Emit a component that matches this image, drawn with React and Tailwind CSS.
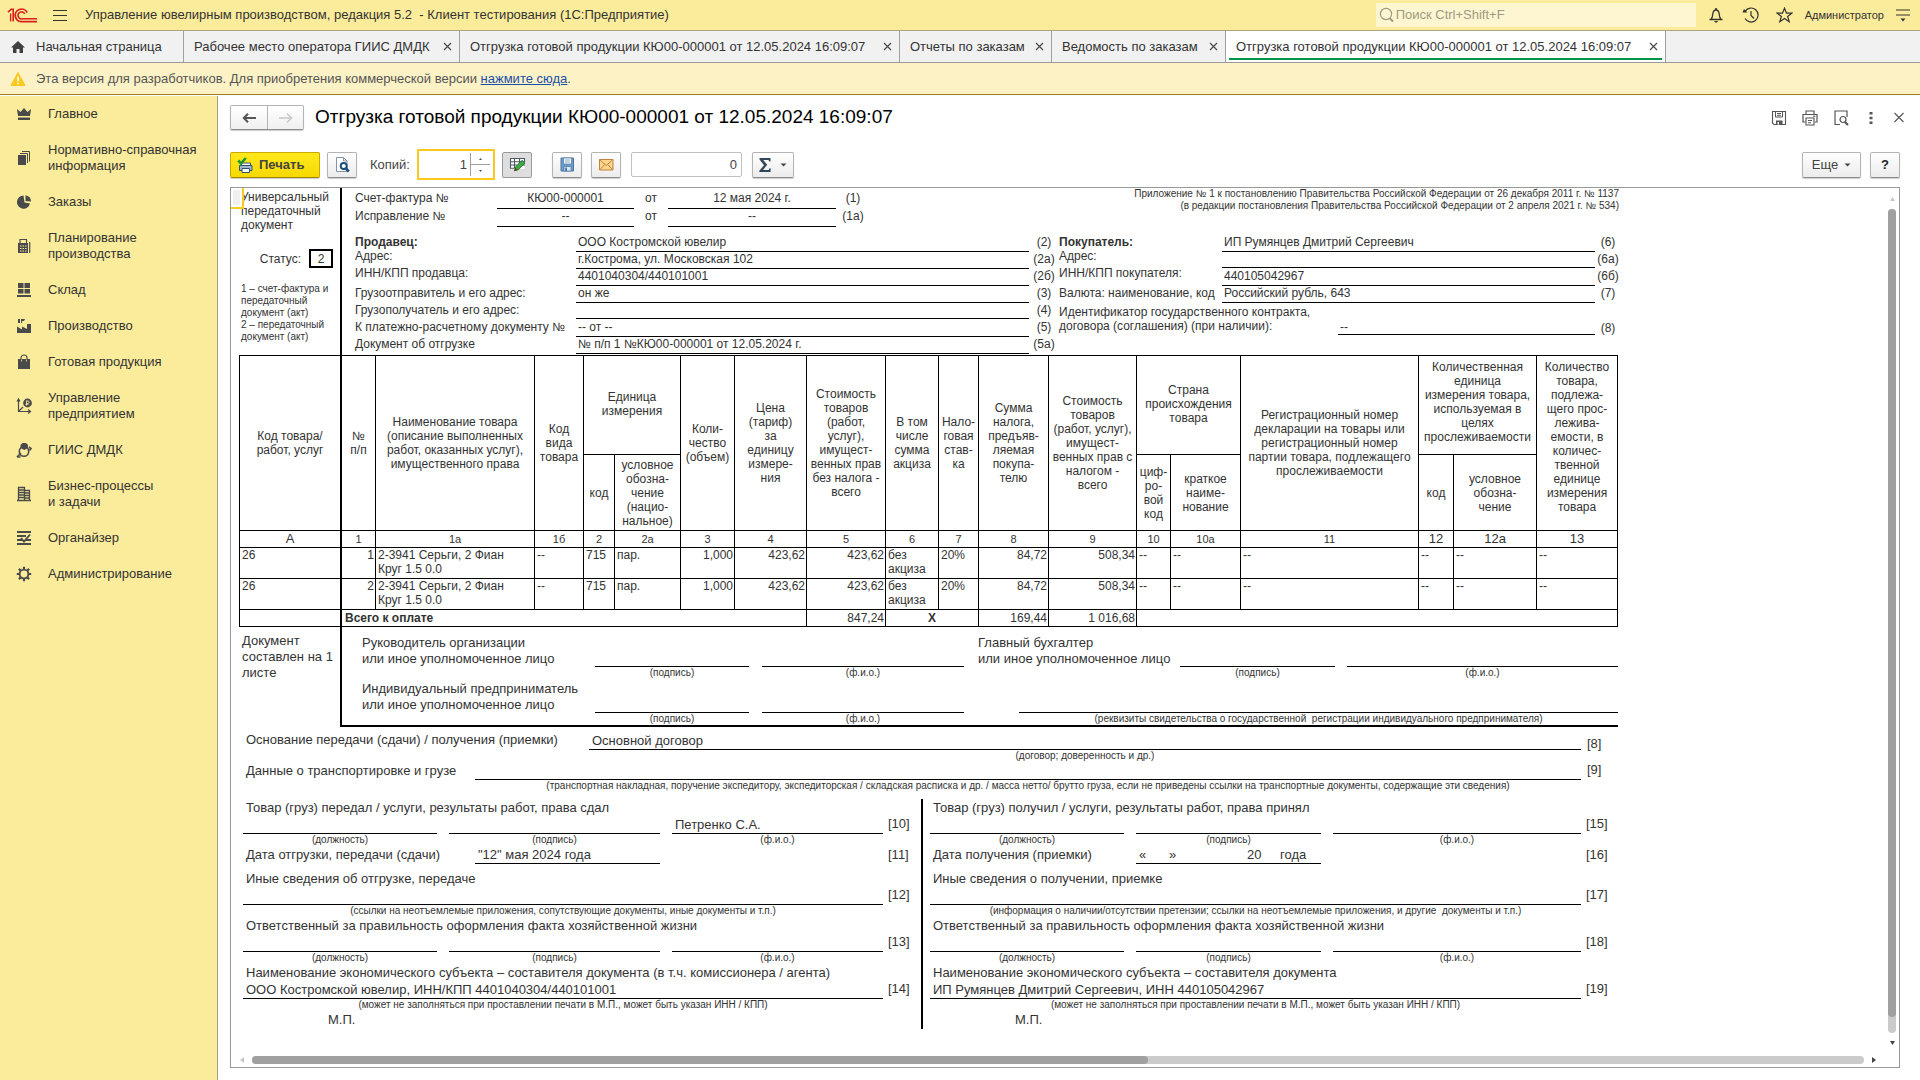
import React from "react";

/* ---------- shared pieces ---------- */

function Svg({ w = 16, h = 16, vb, children, className = "" }) {
  return (
    <svg width={w} height={h} viewBox={vb || `0 0 ${w} ${h}`} className={"shrink-0 " + className} fill="none" aria-hidden="true">
      {children}
    </svg>
  );
}

const Close = () => (
  <Svg w={9} h={9}>
    <path d="M1 1l7 7M8 1L1 8" stroke="#4a4a4a" strokeWidth="1.2" />
  </Svg>
);

const Caret = () => (
  <Svg w={7} h={4}>
    <path d="M0.5 0.5h6L3.5 3.5z" fill="#444" />
  </Svg>
);

const buttonFace =
  "flex items-center justify-center rounded-[2px] border border-[#b4b4b4] border-b-[#8c8c8c] bg-gradient-to-b from-white to-[#ececec] shadow-[0_1px_1px_rgba(0,0,0,0.2)]";

/* ---------- title bar ---------- */

function TitleBar() {
  return (
    <header className="flex h-[31px] shrink-0 items-center border-b border-[#a9a57c] bg-[#fbec9b] pl-[7px] pr-[9px] text-[13px] text-[#333]">
      <Svg w={31} h={17} vb="0 0 31 17">
        <g stroke="#d8211d" fill="none">
          <path d="M1 5.2L4.2 2.2H6.2V14.4" strokeWidth="1.6" />
          <path d="M3.6 6.4V14.4" strokeWidth="1.4" />
          <path d="M20.2 5.6A6.3 6.3 0 1 0 15.6 14.6H30" strokeWidth="1.8" />
          <path d="M17.7 6.9A3.5 3.5 0 1 0 15.6 11.7H30" strokeWidth="1.6" />
        </g>
      </Svg>
      <button type="button" aria-label="Меню" className="ml-[15px] flex h-6 w-[14px] items-center">
        <Svg w={14} h={12}>
          <path d="M0 1h14M0 6h14M0 11h14" stroke="#333" strokeWidth="1" shapeRendering="crispEdges" />
        </Svg>
      </button>
      <h1 className="ml-[18px] flex-1 truncate whitespace-pre">
        {"Управление ювелирным производством, редакция 5.2  - Клиент тестирования (1С:Предприятие)"}
      </h1>
      <label className="flex h-6 w-[320px] items-center bg-[#fdf6d0] pl-[3px]">
        <Svg w={16} h={16}>
          <circle cx="7" cy="7" r="5.6" stroke="#a09a82" strokeWidth="1.2" />
          <path d="M11 11.5l3 3" stroke="#a09a82" strokeWidth="2" />
        </Svg>
        <input
          type="text"
          aria-label="Поиск"
          placeholder="Поиск Ctrl+Shift+F"
          className="min-w-0 flex-1 bg-transparent pl-px text-[13px] outline-none placeholder:text-[#a09a82]"
        />
      </label>
      <button type="button" aria-label="Уведомления" className="ml-3">
        <Svg w={16} h={17}>
          <path d="M1.5 12.5h13M3 12.3c1.4-1.2 1.6-3 1.8-5C5 4.500 6.200 3 8 3s3 1.500 3.200 4.300c.2 2 .4 3.800 1.800 5" stroke="#333" strokeWidth="1.3" />
          <path d="M8 1v2" stroke="#333" strokeWidth="1.6" />
          <path d="M6 14h4.200L8 16z" fill="#333" />
        </Svg>
      </button>
      <button type="button" aria-label="История" className="ml-[18px]">
        <Svg w={17} h={16}>
          <path d="M3.200 4.200A7 7 0 1 1 3 11.500" stroke="#333" strokeWidth="1.200" />
          <path d="M0.500 5.500h5L2 2z" fill="#333" />
          <path d="M9 4v4.500l3 3" stroke="#333" strokeWidth="1.200" />
        </Svg>
      </button>
      <button type="button" aria-label="Избранное" className="ml-[17px]">
        <Svg w={17} h={16}>
          <path d="M8.500 1.200l2 5h5.300l-4.200 3.300 1.600 5.200-4.700-3.200-4.700 3.200 1.600-5.200L1.200 6.200h5.300z" stroke="#333" strokeWidth="1.200" />
        </Svg>
      </button>
      <button type="button" className="ml-3 text-[11px] leading-4">Администратор</button>
      <button type="button" aria-label="Настройки" className="ml-[11px]">
        <Svg w={16} h={14}>
          <path d="M1 2h14M1 7h14" stroke="#333" strokeWidth="1.200" />
          <path d="M5.500 10.500h5L8 13.500z" fill="#333" />
        </Svg>
      </button>
    </header>
  );
}

/* ---------- tabs ---------- */

const tabs = [
  { text: "Рабочее место оператора ГИИС ДМДК", width: "w-[276px]" },
  { text: "Отгрузка готовой продукции КЮ00-000001 от 12.05.2024 16:09:07", width: "w-[440px]" },
  { text: "Отчеты по заказам", width: "w-[152px]" },
  { text: "Ведомость по заказам", width: "w-[174px]" },
  { text: "Отгрузка готовой продукции КЮ00-000001 от 12.05.2024 16:09:07", width: "w-[440px]", active: true },
];

function TabBar() {
  return (
    <nav className="flex h-8 shrink-0 border-b border-[#999] bg-[#f1f1f1] text-[13px] text-[#333]">
      <button type="button" className="flex w-[184px] items-center border-r border-[#a0a0a0] pl-[10px]">
        <Svg w={16} h={14}>
          <path d="M8 1L1 7.500h2V13h3.500V9h3v4H13V7.500h2z" fill="#404040" />
        </Svg>
        <span className="ml-[10px]">Начальная страница</span>
      </button>
      {tabs.map((t, i) => (
        <div key={i} className={"relative flex items-center justify-between border-r border-[#a0a0a0] pl-[10px] pr-[7px] " + t.width + (t.active ? " bg-white" : "")}>
          <button type="button" className="whitespace-nowrap">{t.text}</button>
          <button type="button" aria-label="Закрыть вкладку"><Close /></button>
          {t.active && <span className="absolute inset-x-[3px] bottom-0.5 h-0.5 bg-[#009646]" />}
        </div>
      ))}
    </nav>
  );
}

/* ---------- side menu ---------- */

const K = "#4a4a4a";
const BG = "#fbec9b";
const icons = {
  crown: (
    <>
      <path d="M1 3l3.500 3L8 2l3.500 4L15 3l-1 7H2z" fill={K} />
      <path d="M2 11.500h12V14H2z" fill={K} />
    </>
  ),
  books: (
    <>
      <path d="M2 5h8v10H2z" fill={K} />
      <path d="M4 3.500h7.500V13M6 1.500h7.500V11.500" stroke={K} strokeWidth="1" />
    </>
  ),
  pie: (
    <>
      <path d="M7.500 1.500A6.600 6.600 0 1 0 14 9.500L8.500 8.500z" fill={K} />
      <path d="M9.500 1.200A6.200 6.200 0 0 1 15 7.500L9.500 7z" fill={K} />
    </>
  ),
  calc: (
    <>
      <path d="M2 5h10v10H2z" fill={K} />
      <path d="M4 5V1.500h6.500V5M13.700 4v11" stroke={K} strokeWidth="1.200" />
      <path d="M4 8h1.500M6.500 8H8M9 8h1.500M4 10.500h1.500M6.500 10.500H8M9 10.500h1.500M4 13h1.500M6.500 13H8M9 13h1.500" stroke={BG} strokeWidth="1" />
    </>
  ),
  stock: <path d="M2 1h5.500v5H2zM8.500 1H14v5H8.500zM2 7h5.500v4.500H2zM8.500 7H14v4.500H8.500zM1 13h14v2H1z" fill={K} />,
  factory: <path d="M1 15V8.500l5 3v-3l5 2.500V6h4v9zM2 1h2v4H2zM5 1h4l-1 2H6v2H5z" fill={K} />,
  bag: (
    <>
      <path d="M2 5h12v10H2z" fill={K} />
      <path d="M5 7V4a3 3 0 0 1 6 0v3" stroke={K} strokeWidth="1.200" />
      <path d="M5.500 5.500v2M10.500 5.500v2" stroke={BG} strokeWidth="0.800" />
    </>
  ),
  chart: (
    <>
      <path d="M2.500 1v12.500H14M1 3.500l1.500-2.500L4 3.500M12 11.500l2.500 2-2.500 2M3 13l4-4" stroke={K} strokeWidth="1.200" />
      <circle cx="11.500" cy="5" r="4.400" fill={K} />
      <path d="M10.500 2.500v5M10.500 3h1.500a1.200 1.200 0 0 1 0 2.400h-2M9.500 6.600h3" stroke={BG} strokeWidth="0.800" />
    </>
  ),
  ring: (
    <>
      <circle cx="8" cy="9.500" r="4.700" stroke={K} strokeWidth="1.600" />
      <path d="M4.500 3L6.500 1h3.500l2 2v3L8.300 8 4.500 6z" fill={K} />
      <path d="M1 15l4-4M1 15h3.500M13 5l2 1.500-1.500 2" stroke={K} strokeWidth="1.700" />
    </>
  ),
  building: (
    <>
      <path d="M2.500 14V1.500h6V14M8.500 4.500h5V14M1 14.500h14" stroke={K} strokeWidth="1.300" />
      <path d="M3 4h5M3 6.500h5M3 9h5M3 11.500h5M9 7h4M9 9.500h4M9 12h4" stroke={K} strokeWidth="1.300" />
    </>
  ),
  organizer: (
    <>
      <path d="M1 2h14M1 6h9M1 10h5M1 14h14M10 10h5" stroke={K} strokeWidth="1.900" />
      <path d="M5 8l3 3.500L14 4.500" stroke={K} strokeWidth="1.900" />
    </>
  ),
  gear: (
    <>
      <circle cx="8" cy="8" r="4.400" stroke={K} strokeWidth="1.900" />
      <path d="M8 .8v2.600M8 12.600v2.600M.8 8h2.600M12.600 8h2.600M2.900 2.900l1.900 1.900M11.200 11.200l1.900 1.900M13.100 2.900l-1.900 1.900M4.800 11.200l-1.900 1.900" stroke={K} strokeWidth="2.200" />
    </>
  ),
};

const menu = [
  ["crown", "Главное"],
  ["books", "Нормативно-справочная\nинформация"],
  ["pie", "Заказы"],
  ["calc", "Планирование\nпроизводства"],
  ["stock", "Склад"],
  ["factory", "Производство"],
  ["bag", "Готовая продукция"],
  ["chart", "Управление\nпредприятием"],
  ["ring", "ГИИС ДМДК"],
  ["building", "Бизнес-процессы\nи задачи"],
  ["organizer", "Органайзер"],
  ["gear", "Администрирование"],
];

function SideMenu() {
  return (
    <nav className="w-[218px] shrink-0 border-r border-[#a0a08c] bg-[#fbec9b] text-[13px] leading-4 text-[#333]">
      {menu.map(([icon, text]) => (
        <button type="button" key={icon} className="flex w-full items-center py-[10px] pl-4 text-left">
          <Svg>{icons[icon]}</Svg>
          <span className="ml-4 whitespace-pre-line">{text}</span>
        </button>
      ))}
    </nav>
  );
}

/* ---------- form header and toolbar ---------- */

function FormHeader() {
  return (
    <div className="flex h-[25px] items-center">
      <div className="flex h-[25px] rounded-[2px] border border-[#b4b4b4] border-b-[#8c8c8c] bg-gradient-to-b from-white to-[#f0f0f0] shadow-[0_1px_1px_rgba(0,0,0,0.2)]">
        <button type="button" aria-label="Назад" className="flex w-[37px] items-center justify-center border-r border-[#b4b4b4]">
          <Svg w={14} h={12}>
            <path d="M14 6H3" stroke="#555" strokeWidth="2" />
            <path d="M6 1.800L1.800 6 6 10.200" stroke="#555" strokeWidth="2" />
          </Svg>
        </button>
        <button type="button" aria-label="Вперед" className="flex w-[35px] items-center justify-center">
          <Svg w={14} h={12}>
            <path d="M0 6h12M8 1.500L12.500 6 8 10.500" stroke="#c8c8c8" strokeWidth="1.600" />
          </Svg>
        </button>
      </div>
      <h2 className="ml-[11px] flex-1 pb-0.5 text-[19px] leading-6 text-black">Отгрузка готовой продукции КЮ00-000001 от 12.05.2024 16:09:07</h2>
      <div className="-mr-[5px] flex items-center gap-[15px]">
        <button type="button" aria-label="Сохранить">
          <Svg>
            <path d="M1.500 1.500h13v13H3L1.500 13z" stroke="#555" strokeWidth="1.100" />
            <path d="M4.500 1.500h7V7h-7zM6 3.500h4M6 5.300h4" stroke="#555" strokeWidth="1" />
            <path d="M5 10.500h6.500v4H5z" fill="#555" />
            <path d="M6.500 12h1.500v2.500H6.500z" fill="#fff" />
          </Svg>
        </button>
        <button type="button" aria-label="Печать формы">
          <Svg>
            <path d="M4 4.500V1h8v3.500M3.500 12H1V4.500h14V12h-2.500" stroke="#555" strokeWidth="1.200" />
            <path d="M4 8h8v7H4zM6 10.500h4M6 12.700h3M11 6.200h2.500" stroke="#555" strokeWidth="1.100" />
          </Svg>
        </button>
        <button type="button" aria-label="Просмотр">
          <Svg>
            <path d="M7 14.500H2V1h12v6" stroke="#555" strokeWidth="1.200" />
            <circle cx="10" cy="9.500" r="3" stroke="#555" strokeWidth="1.200" />
            <path d="M12 12l3 3" stroke="#555" strokeWidth="2.200" />
          </Svg>
        </button>
        <button type="button" aria-label="Действия" className="flex w-[14px] justify-center">
          <Svg w={4} h={12}>
            <path d="M.5 0h3v2.500h-3zM.5 4.700h3v2.500h-3zM.5 9.400h3v2.500h-3z" fill="#555" />
          </Svg>
        </button>
        <button type="button" aria-label="Закрыть" className="flex w-3 justify-center">
          <Svg w={10} h={11}>
            <path d="M.5 1l9 9M9.500 1l-9 9" stroke="#555" strokeWidth="1.100" />
          </Svg>
        </button>
      </div>
    </div>
  );
}

function Toolbar() {
  return (
    <div className="mt-[19px] flex h-[31px] items-center text-[13px] text-[#444]">
      <button
        type="button"
        className="flex h-[26px] w-[90px] items-center rounded-[2px] border border-[#c9a800] border-b-[#a08600] bg-gradient-to-b from-[#ffe81a] to-[#f7d900] pl-[6px] font-bold text-[#444] shadow-[0_1px_1px_rgba(0,0,0,0.2)]"
      >
        <Svg>
          <path d="M4.500 6h9v4h-9z" fill="#fff" stroke="#31546e" />
          <path d="M2.500 8.500h12.500v5H2.500z" fill="#9fb9ca" stroke="#31546e" />
          <path d="M5 11.500h7.500V15.500H5z" fill="#fff" stroke="#31546e" />
          <path d="M1.200 3.500l2.800 2.800L8.800 1" stroke="#1c9a2c" strokeWidth="2.600" />
        </Svg>
        <span className="ml-[6px]">Печать</span>
      </button>
      <button type="button" aria-label="Предварительный просмотр" className={"ml-[7px] h-[26px] w-[30px] " + buttonFace}>
        <Svg w={15} h={17}>
          <path d="M1.500 1.500h7l3.500 3.500v10.500h-10.500z" fill="#fff" stroke="#8796a3" />
          <path d="M8.500 1.500V5H12" stroke="#8796a3" />
          <circle cx="8.700" cy="10" r="3" stroke="#17517a" strokeWidth="1.900" fill="#fff" />
          <path d="M10.800 12.300l3 3.200" stroke="#17517a" strokeWidth="2.600" />
        </Svg>
      </button>
      <label htmlFor="copies" className="ml-[13px] w-[47px]">Копий:</label>
      <div className="flex h-[31px] w-[78px] items-center border-2 border-[#fbc81e] bg-white">
        <input id="copies" type="text" defaultValue="1" className="h-6 min-w-0 flex-1 pr-[3px] text-right text-[13px] outline-none" />
        <div className="mr-[3px] flex h-[23px] w-5 flex-col border-l border-[#a0a0a0]">
          <button type="button" aria-label="Больше" className="flex flex-1 items-center justify-center border-b border-[#a0a0a0]">
            <Svg w={3} h={2}><path d="M0 2h3L1.500 0z" fill="#555" /></Svg>
          </button>
          <button type="button" aria-label="Меньше" className="flex flex-1 items-center justify-center">
            <Svg w={3} h={2}><path d="M0 0h3L1.500 2z" fill="#555" /></Svg>
          </button>
        </div>
      </div>
      <button type="button" aria-label="Редактировать" className="ml-[7px] flex h-[26px] w-[30px] items-center justify-center rounded-[2px] border border-[#9a9a9a] bg-[#dedede]">
        <Svg w={17} h={15}>
          <path d="M1 1.500h14.500v10.500H1z" fill="#fff" />
          <path d="M1 1.500h15M1 4.700h15M1 8h15M1 11.300h9M1.500 1.500v10M5.500 1.500v10M10.500 1.500v6M15.500 1.500v3" stroke="#4d5a63" strokeWidth="1.100" />
          <path d="M5.500 13.800l1.200-4L13 3.200l3 2.800-6.500 6.700z" fill="#3fa845" stroke="#2b6b30" strokeWidth="0.800" />
          <path d="M5.300 14l1-3.200 2.300 2.200z" fill="#6b3b13" />
        </Svg>
      </button>
      <button type="button" aria-label="Сохранить документ" className={"ml-[20px] h-[26px] w-[30px] " + buttonFace}>
        <Svg w={15} h={15}>
          <path d="M1 1h12.500v13H1z" fill="#6e9ccb" stroke="#4a76a3" />
          <path d="M3.500 1h8v6h-8z" fill="#fff" stroke="#4a76a3" strokeWidth="0.700" />
          <path d="M4.800 3h5.400M4.800 5h5.400" stroke="#8aa7c4" />
          <path d="M4 9.500h7V14H4z" fill="#dde8f2" stroke="#4a76a3" strokeWidth="0.700" />
          <path d="M5.200 10.500h1.800V14H5.200z" fill="#4a76a3" />
        </Svg>
      </button>
      <button type="button" aria-label="Отправить по почте" className={"ml-[9px] h-[26px] w-[30px] " + buttonFace}>
        <Svg w={15} h={12}>
          <path d="M.5 .5h13.500v10.500H.5z" fill="#fbd58c" stroke="#c0823c" />
          <path d="M1 1l6.200 5.500L13.500 1M1 10.700l4.500-5M13.500 10.700l-4.500-5" stroke="#c0823c" />
        </Svg>
      </button>
      <input
        type="text"
        aria-label="Сумма выделенных ячеек"
        readOnly
        value="0"
        className="ml-[10px] h-[25px] w-[111px] rounded-[2px] border border-[#c0c0c0] pr-1 text-right text-[13px] outline-none"
      />
      <button type="button" aria-label="Сумма" className={"ml-[10px] h-[26px] w-[42px] gap-[9px] " + buttonFace}>
        <Svg w={12} h={14}>
          <path d="M.5 0h11v3.500h-1.200L9.500 2H4.200l4 4.800L4 12h5.600l1-1.800h1V14H.3v-1.300l4.700-5.500L.5 1.500z" fill="#33475b" />
        </Svg>
        <Caret />
      </button>
      <div className="flex-1" />
      <button type="button" className={"h-[26px] w-[59px] gap-[6px] text-[13px] " + buttonFace}>
        Еще <Caret />
      </button>
      <button type="button" aria-label="Справка" className={"ml-[9px] h-[26px] w-[30px] text-[13px] font-bold text-[#222] " + buttonFace}>?</button>
    </div>
  );
}

/* ---------- printed form: top part ---------- */

const sellerRows = [
  ["Продавец:", "ООО Костромской ювелир", "(2)"],
  ["Адрес:", "г.Кострома, ул. Московская 102", "(2а)"],
  ["ИНН/КПП продавца:", "4401040304/440101001", "(2б)"],
  ["Грузоотправитель и его адрес:", "он же", "(3)"],
  ["Грузополучатель и его адрес:", "", "(4)"],
  ["К платежно-расчетному документу №", "-- от --", "(5)"],
  ["Документ об отгрузке", "№ п/п 1 №КЮ00-000001 от 12.05.2024 г.", "(5а)"],
];

const buyerRows = [
  ["Покупатель:", "ИП Румянцев Дмитрий Сергеевич", "(6)"],
  ["Адрес:", "", "(6а)"],
  ["ИНН/КПП покупателя:", "440105042967", "(6б)"],
  ["Валюта: наименование, код", "Российский рубль, 643", "(7)"],
];

function PartyRow({ row, index, cols }) {
  const high = index === 1 || index === 2;
  return (
    <div className={"grid h-[17px] leading-[18px] " + cols}>
      <span className={"whitespace-nowrap " + (index === 0 ? "font-bold" : "") + (high ? " leading-3" : "")}>{row[0]}</span>
      <span className="border-b border-black pl-0.5">{row[1]}</span>
      <span className="text-center">{row[2]}</span>
    </div>
  );
}

function InvoiceNumberRow({ label, number, date, mark }) {
  return (
    <div className="grid h-[18px] grid-cols-[142px_137px_34px_168px_34px] leading-5">
      <span>{label}</span>
      <span className="border-b border-black text-center">{number}</span>
      <span className="text-center">от</span>
      <span className="border-b border-black text-center">{date}</span>
      <span className="text-center">{mark}</span>
    </div>
  );
}

function SheetTop() {
  return (
    <section className="flex h-[167px] text-[12px]">
      <div className="w-[103px] shrink-0 border-r-2 border-black pl-0.5 pt-0.5">
        <p className="whitespace-pre-line leading-[14px]">{"Универсальный\nпередаточный\nдокумент"}</p>
        <div className="mt-[17px] flex items-center justify-end pr-[7px]">
          <span>Статус:</span>
          <span className="ml-2 flex h-[19px] w-6 items-center justify-center border-2 border-black">2</span>
        </div>
        <p className="mt-[15px] whitespace-pre text-[10px] leading-3">
          {"1 – счет-фактура и\nпередаточный\nдокумент (акт)\n2 – передаточный\nдокумент (акт)"}
        </p>
      </div>
      <div className="flex-1 pl-[13px]">
        <div className="flex justify-between">
          <div>
            <InvoiceNumberRow label="Счет-фактура №" number="КЮ00-000001" date="12 мая 2024 г." mark="(1)" />
            <InvoiceNumberRow label="Исправление №" number="--" date="--" mark="(1а)" />
          </div>
          <p className="pr-0.5 text-right text-[10px] leading-3">
            Приложение № 1 к постановлению Правительства Российской Федерации от 26 декабря 2011 г. № 1137
            <br />
            (в редакции постановления Правительства Российской Федерации от 2 апреля 2021 г. № 534)
          </p>
        </div>
        <div className="mt-[9px] flex">
          <div className="w-[704px]">
            {sellerRows.map((r, i) => (
              <PartyRow key={i} row={r} index={i} cols="grid-cols-[221px_453px_30px]" />
            ))}
          </div>
          <div className="flex-1">
            {buyerRows.map((r, i) => (
              <PartyRow key={i} row={r} index={i} cols="grid-cols-[163px_373px_26px]" />
            ))}
            <div className="grid h-[34px] grid-cols-[279px_257px_26px] pt-1 leading-[14px]">
              <span className="whitespace-pre">{"Идентификатор государственного контракта,\nдоговора (соглашения) (при наличии):"}</span>
              <span className="flex items-end border-b border-black pl-0.5">--</span>
              <span className="flex items-end justify-center">(8)</span>
            </div>
          </div>
        </div>
      </div>
    </section>
  );
}

/* ---------- printed form: goods table ---------- */

const colWidths = [
  "w-[102px]", "w-[34px]", "w-[159px]", "w-[49px]", "w-[31px]", "w-[66px]", "w-[54px]", "w-[72px]", "w-[79px]", "w-[53px]",
  "w-[40px]", "w-[70px]", "w-[88px]", "w-[34px]", "w-[70px]", "w-[178px]", "w-[35px]", "w-[83px]", "w-[81px]",
];

const headTop = [
  { t: "Код товара/\nработ, услуг", r: 2 },
  { t: "№\nп/п", r: 2 },
  { t: "Наименование товара\n(описание выполненных\nработ, оказанных услуг),\nимущественного права", r: 2 },
  { t: "Код\nвида\nтовара", r: 2 },
  { t: "Единица\nизмерения", c: 2 },
  { t: "Коли-\nчество\n(объем)", r: 2 },
  { t: "Цена\n(тариф)\nза\nединицу\nизмере-\nния", r: 2 },
  { t: "Стоимость\nтоваров\n(работ,\nуслуг),\nимущест-\nвенных прав\nбез налога -\nвсего", r: 2 },
  { t: "В том\nчисле\nсумма\nакциза", r: 2 },
  { t: "Нало-\nговая\nстав-\nка", r: 2 },
  { t: "Сумма\nналога,\nпредъяв-\nляемая\nпокупа-\nтелю", r: 2 },
  { t: "Стоимость\nтоваров\n(работ, услуг),\nимущест-\nвенных прав с\nналогом -\nвсего", r: 2 },
  { t: "Страна\nпроисхождения\nтовара", c: 2 },
  { t: "Регистрационный номер\nдекларации на товары или\nрегистрационный номер\nпартии товара, подлежащего\nпрослеживаемости", r: 2 },
  { t: "Количественная\nединица\nизмерения товара,\nиспользуемая в\nцелях\nпрослеживаемости", c: 2, up: true },
  { t: "Количество\nтовара,\nподлежа-\nщего прос-\nлежива-\nемости, в\nколичес-\nтвенной\nединице\nизмерения\nтовара", r: 2, up: true },
];

const headSub = [
  "код",
  "условное\nобозна-\nчение\n(нацио-\nнальное)",
  "циф-\nро-\nвой\nкод",
  "краткое\nнаиме-\nнование",
  "код",
  "условное\nобозна-\nчение",
];

const numbers = ["А", "1", "1а", "1б", "2", "2а", "3", "4", "5", "6", "7", "8", "9", "10", "10а", "11", "12", "12а", "13"];
const bigNumbers = ["А", "12", "12а", "13"];
const rightCols = [1, 6, 7, 8, 11, 12];

const goods = ["1", "2"].map((n) => [
  "26", n, "2-3941 Серьги, 2 Фиан\nКруг 1.5 0.0", "--", "715", "пар.", "1,000", "423,62", "423,62", "без\nакциза", "20%", "84,72", "508,34",
  "--", "--", "--", "--", "--", "--",
]);

const edge = "border-b border-black p-0 whitespace-pre ";

function GoodsTable() {
  const last = "border-r ";
  return (
    <table className="w-[1379px] table-fixed border-separate border-spacing-0 border-l border-t border-black text-[12px] leading-[14px]">
      <colgroup>
        {colWidths.map((w, i) => (
          <col key={i} className={w} />
        ))}
      </colgroup>
      <thead>
        <tr className="h-[99px]">
          {headTop.map((h, i) => (
            <th
              key={i}
              rowSpan={h.r || 1}
              colSpan={h.c || 1}
              className={edge + "text-center font-normal " + (i === 0 ? "border-r-2 " : last) + (h.up ? "pt-1 align-top" : h.r ? "align-middle" : "pb-0.5 align-middle")}
            >
              {h.t}
            </th>
          ))}
        </tr>
        <tr className="h-[76px]">
          {headSub.map((t, i) => (
            <th key={i} className={edge + last + "text-center align-middle font-normal"}>{t}</th>
          ))}
        </tr>
        <tr className="h-[17px]">
          {numbers.map((t, i) => (
            <th
              key={i}
              className={edge + "text-center align-middle font-normal " + (i === 0 ? "border-r-2 " : last) + (bigNumbers.includes(t) ? "text-[13px]" : "text-[11px]")}
            >
              {t}
            </th>
          ))}
        </tr>
      </thead>
      <tbody>
        {goods.map((row, r) => (
          <tr key={r} className="h-[31px]">
            {row.map((t, i) => (
              <td key={i} className={edge + "align-top " + (i === 0 ? "border-r-2 " : last) + (rightCols.includes(i) ? "pr-px text-right" : "pl-0.5")}>
                {t}
              </td>
            ))}
          </tr>
        ))}
        <tr className="h-[17px]">
          <td className={edge + "border-r-2"} />
          <td colSpan={7} className={edge + last + "pl-[3px] font-bold"}>Всего к оплате</td>
          <td className={edge + last + "pr-px text-right"}>847,24</td>
          <td colSpan={2} className={edge + last + "text-center font-bold"}>Х</td>
          <td className={edge + last + "pr-px text-right"}>169,44</td>
          <td className={edge + last + "pr-px text-right"}>1 016,68</td>
          <td colSpan={6} className={edge + last} />
        </tr>
      </tbody>
    </table>
  );
}

/* ---------- printed form: signatures ---------- */

function Line({ caption, children, tall, className = "" }) {
  return (
    <div className={className}>
      <div className={"flex items-end border-b border-black leading-4 " + (tall ? "h-8" : "h-[18px]")}>{children}</div>
      <div className="h-3 whitespace-pre text-center text-[10px] leading-3">{caption}</div>
    </div>
  );
}

function Signatures() {
  return (
    <section className="flex text-[13px] leading-4">
      <p className="w-[101px] shrink-0 pl-[3px] pt-[6px]">Документ<br />составлен на 1<br />листе</p>
      <div className="flex flex-1 flex-col gap-0.5 border-b-2 border-l-2 border-black pl-5 pt-2">
        <div className="grid grid-cols-[233px_154px_215px_216px_155px_1fr]">
          <p>Руководитель организации<br />или иное уполномоченное лицо</p>
          <Line tall caption="(подпись)" />
          <Line tall caption="(ф.и.о.)" className="pl-[13px]" />
          <p className="pl-[14px]">Главный бухгалтер<br /><span className="whitespace-nowrap">или иное уполномоченное лицо</span></p>
          <Line tall caption="(подпись)" />
          <Line tall caption="(ф.и.о.)" className="pl-3" />
        </div>
        <div className="grid grid-cols-[233px_154px_215px_1fr]">
          <p>Индивидуальный предприниматель<br />или иное уполномоченное лицо</p>
          <Line tall caption="(подпись)" />
          <Line tall caption="(ф.и.о.)" className="pl-[13px]" />
          <Line tall className="pl-[55px]" caption="(реквизиты свидетельства о государственной  регистрации индивидуального предпринимателя)" />
        </div>
      </div>
    </section>
  );
}

function BasisRows() {
  return (
    <section className="text-[13px]">
      <div className="flex pt-[5px]">
        <span className="w-[350px] pl-[7px] leading-4">Основание передачи (сдачи) / получения (приемки)</span>
        <Line className="flex-1" caption="(договор; доверенность и др.)"><span className="pl-[3px]">Основной договор</span></Line>
        <span className="w-[37px] pl-[6px] pt-1 leading-4">[8]</span>
      </div>
      <div className="flex">
        <span className="w-[236px] pl-[7px] leading-[18px]">Данные о транспортировке и грузе</span>
        <Line
          className="flex-1"
          caption="(транспортная накладная, поручение экспедитору, экспедиторская / складская расписка и др. / масса нетто/ брутто груза, если не приведены ссылки на транспортные документы, содержащие эти сведения)"
        />
        <span className="w-[37px] pl-[6px] leading-4">[9]</span>
      </div>
    </section>
  );
}

function SignRow({ grid, name, mark }) {
  return (
    <div className={"grid gap-x-3 " + grid}>
      <Line caption="(должность)" />
      <Line caption="(подпись)" />
      <Line caption="(ф.и.о.)"><span className="pl-[3px]">{name}</span></Line>
      <span className="-ml-[7px] leading-4">{mark}</span>
    </div>
  );
}

function WideRow({ text, caption, mark }) {
  return (
    <div className="flex">
      <Line className="flex-1" caption={caption}><span className="pl-[3px]">{text}</span></Line>
      <span className="w-[35px] pl-[5px] leading-4">{mark}</span>
    </div>
  );
}

const Title = ({ children }) => <p className="h-[17px] whitespace-nowrap pl-[3px] leading-[17px]">{children}</p>;

function Half({ data, grid, dateRow, className }) {
  return (
    <div className={className}>
      <Title>{data.title}</Title>
      <SignRow grid={grid} name={data.name} mark={data.marks[0]} />
      {dateRow}
      <div className="mt-[6px]" />
      <Title>{data.other}</Title>
      <WideRow caption={data.otherCaption} mark={data.marks[2]} />
      <Title>Ответственный за правильность оформления факта хозяйственной жизни</Title>
      <SignRow grid={grid} mark={data.marks[3]} />
      <Title>{data.entity}</Title>
      <WideRow text={data.entityName} caption="(может не заполняться при проставлении печати в М.П., может быть указан ИНН / КПП)" mark={data.marks[4]} />
      <p className="pl-[85px] leading-[18px]">М.П.</p>
    </div>
  );
}

const sender = {
  title: "Товар (груз) передал / услуги, результаты работ, права сдал",
  name: "Петренко С.А.",
  other: "Иные сведения об отгрузке, передаче",
  otherCaption: "(ссылки на неотъемлемые приложения, сопутствующие документы, иные документы и т.п.)",
  entity: "Наименование экономического субъекта – составителя документа (в т.ч. комиссионера / агента)",
  entityName: "ООО Костромской ювелир, ИНН/КПП 4401040304/440101001",
  marks: ["[10]", "[11]", "[12]", "[13]", "[14]"],
};

const receiver = {
  title: "Товар (груз) получил / услуги, результаты работ, права принял",
  name: "",
  other: "Иные сведения о получении, приемке",
  otherCaption: "(информация о наличии/отсутствии претензии; ссылки на неотъемлемые приложения, и другие  документы и т.п.)",
  entity: "Наименование экономического субъекта – составителя документа",
  entityName: "ИП Румянцев Дмитрий Сергеевич, ИНН 440105042967",
  marks: ["[15]", "[16]", "[17]", "[18]", "[19]"],
};

function Transfer() {
  return (
    <section className="mt-[7px] flex text-[13px]">
      <Half
        className="w-[684px] border-r-2 border-black pl-1 pr-[3px]"
        grid="grid-cols-[194px_211px_1fr_23px]"
        data={sender}
        dateRow={
          <div className="flex h-[18px] leading-[18px]">
            <span className="w-[232px] pl-[3px]">Дата отгрузки, передачи (сдачи)</span>
            <span className="w-[185px] border-b border-black pl-[3px]">"12" мая 2024 года</span>
            <span className="flex-1" />
            <span className="w-[35px] pl-[5px]">[11]</span>
          </div>
        }
      />
      <Half
        className="flex-1 pl-[7px] pr-0.5"
        grid="grid-cols-[194px_185px_1fr_23px]"
        data={receiver}
        dateRow={
          <div className="flex h-[18px] leading-[18px]">
            <span className="w-[206px] pl-[3px]">Дата получения (приемки)</span>
            <span className="flex w-[185px] border-b border-black pl-[3px]">
              <span className="w-[30px]">«</span>
              <span className="w-[78px]">»</span>
              <span className="w-[33px]">20</span>
              <span>года</span>
            </span>
            <span className="flex-1" />
            <span className="w-[35px] pl-[5px]">[16]</span>
          </div>
        }
      />
    </section>
  );
}

/* ---------- sheet viewer ---------- */

function Viewer() {
  return (
    <div className="mt-[7px] flex min-h-0 flex-1 flex-col border border-[#999] bg-white">
      <div className="flex min-h-0 flex-1">
        <div className="relative min-w-0 flex-1 overflow-hidden pl-2 text-[#333]">
          <div className="w-[1379px]">
            <SheetTop />
            <GoodsTable />
            <Signatures />
            <BasisRows />
            <Transfer />
          </div>
          <div className="absolute left-0 top-0 h-[21px] w-[13px] border-b-2 border-r-2 border-[#fbc81e] bg-[#f0f0f0] shadow-[inset_0_0_0_2px_#fff]" />
        </div>
        <div className="mr-[3px] flex w-2 flex-col items-center pb-[11px] pt-[9px]">
          <Svg w={5} h={4}><path d="M2.500 0L5 4H0z" fill="#c8c8c8" /></Svg>
          <div className="my-2 w-2 flex-1 rounded-full bg-[#cbcbcb]">
            <div className="h-[98%] rounded-full bg-[#a0a0a0]" />
          </div>
          <Svg w={5} h={4}><path d="M2.500 4L5 0H0z" fill="#444" /></Svg>
        </div>
      </div>
      <div className="mb-[3px] flex h-2 items-center pl-[9px] pr-[23px]">
        <Svg w={4} h={6}><path d="M0 3l4-3v6z" fill="#c8c8c8" /></Svg>
        <div className="mx-2 h-2 flex-1 rounded-full bg-[#cbcbcb]">
          <div className="h-2 w-[55.6%] rounded-full bg-[#a0a0a0]" />
        </div>
        <Svg w={4} h={6}><path d="M4 3L0 0v6z" fill="#444" /></Svg>
      </div>
    </div>
  );
}

export default function App() {
  return (
    <div className="flex h-screen flex-col overflow-hidden bg-white font-['Liberation_Sans',Arial,sans-serif]">
      <TitleBar />
      <TabBar />
      <div className="mb-px flex h-8 shrink-0 items-center border-b border-[#9a8120] bg-[#fdf2c5] pl-[10px] text-[13px] text-[#555]">
        <Svg w={16} h={16}>
          <path d="M8 1.500L15 14.500H1z" fill="#fbc81e" stroke="#fbc81e" strokeLinejoin="round" />
          <path d="M8 5.500v5M8 11.700v1.600" stroke="#fff" strokeWidth="1.600" />
        </Svg>
        <p className="ml-[10px]">
          Эта версия для разработчиков. Для приобретения коммерческой версии <a href="#buy" className="text-[#1a4fa8] underline">нажмите сюда</a>.
        </p>
      </div>
      <div className="flex min-h-0 flex-1">
        <SideMenu />
        <main className="flex min-w-0 flex-1 flex-col pb-3 pl-3 pr-5 pt-[9px]">
          <FormHeader />
          <Toolbar />
          <Viewer />
        </main>
      </div>
    </div>
  );
}
